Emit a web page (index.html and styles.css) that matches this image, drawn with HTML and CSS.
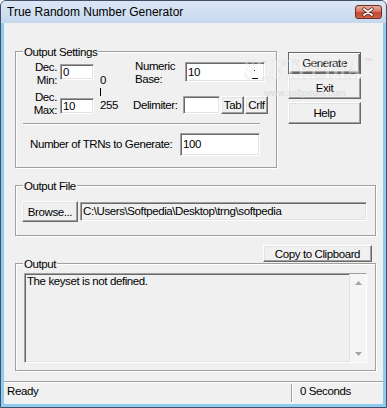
FILE: index.html
```html
<!DOCTYPE html>
<html>
<head>
<meta charset="utf-8">
<title>True Random Number Generator</title>
<link rel="stylesheet" href="styles.css">
</head>
<body>

<div class="window">
  <div class="titlebar">
    <span class="title">True Random Number Generator</span>
    <div class="close">
      <svg width="25" height="12" viewBox="0 0 25 12">
        <path d="M8 3 L16 9 M16 3 L8 9" stroke="#4a1f17" stroke-width="3.4" stroke-linecap="round"/>
        <path d="M8 3 L16 9 M16 3 L8 9" stroke="#fff" stroke-width="1.9" stroke-linecap="round"/>
      </svg>
    </div>
  </div>

  <div class="client">
    <div class="top">
      <div class="group settings">
        <span class="caption">Output Settings</span>
        <div class="grid">
          <div class="dec">Dec.<br>Min:</div>
          <div class="edit e-min">0</div>
          <div class="range">
            <div>0</div>
            <div class="bar"></div>
            <div class="r-max">255</div>
          </div>
          <div class="numeric">Numeric<br>Base:</div>
          <div class="edit e-base">10<svg class="spin" width="8" height="18" viewBox="0 0 8 18"><rect x="3" y="7" width="1" height="1" fill="#000"/><rect x="1" y="15" width="6" height="1" fill="#000"/></svg></div>

          <div class="dec dec-max">Dec.<br>Max:</div>
          <div class="edit e-max">10</div>
          <div class="delim">Delimiter:</div>
          <div class="delim-ctrls">
            <div class="edit e-delim"></div>
            <div class="btn small">Tab</div>
            <div class="btn small">Crlf</div>
          </div>
        </div>
        <div class="sep"></div>
        <div class="trn-row">
          <span class="trn-label">Number of TRNs to Generate:</span>
          <div class="edit e-trn">100</div>
        </div>
      </div>

      <div class="actions">
        <div class="btn big default">Generate</div>
        <div class="btn big">Exit</div>
        <div class="btn big">Help</div>
      </div>
    </div>

    <div class="group file">
      <span class="caption">Output File</span>
      <div class="btn browse">Browse...</div>
      <div class="edit path">C:\Users\Softpedia\Desktop\trng\softpedia</div>
    </div>

    <div class="copy-row">
      <div class="btn copy">Copy to Clipboard</div>
    </div>

    <div class="group output">
      <span class="caption">Output</span>
      <div class="edit log">
        <div class="log-text">The keyset is not defined.</div>
        <div class="scroll">
          <div class="arrow"><svg width="7" height="4" viewBox="0 0 7 4"><path d="M3.5 0 L7 4 L0 4 Z" fill="#a3a3a3"/></svg></div>
          <div class="arrow"><svg width="7" height="4" viewBox="0 0 7 4"><path d="M0 0 L7 0 L3.5 4 Z" fill="#a3a3a3"/></svg></div>
        </div>
      </div>
    </div>

    <div class="status">
      <div class="cell1">Ready</div>
      <div class="cell2">0 Seconds</div>
    </div>
  </div>

  <!-- watermark -->
  <div class="wm">SOFTPEDIA</div>
  <div class="wm-tm">&trade;</div>
  <div class="wm-url">www.softpedia.com</div>
</div>

</body>
</html>
```

FILE: styles.css
```css
html, body {margin: 0; padding: 0;}
body {
  font-family: "Liberation Sans", Arial, sans-serif;
  font-size: 11.5px; letter-spacing: -0.4px; color: #000;
}

/*window frame*/
.window {
  position: relative; box-sizing: border-box;
  width: 387px; height: 408px;
  border: 1px solid #3f5168; border-radius: 6px 6px 0 0;
  padding: 0 3px 3px; background: #8fcbef;
  display: flex; flex-direction: column; overflow: hidden;
}
.titlebar {
  height: 22px; margin: 0 -3px; padding-left: 6px; flex: none;
  display: flex; align-items: flex-start;
  background: linear-gradient(#dce7f5, #c6d8ee);
}
.title {font: 12px/22px "Liberation Sans", Arial, sans-serif; letter-spacing: 0;}
.close {
  box-sizing: border-box; width: 27px; height: 14px; margin: 4px 4px 0 auto;
  border: 1px solid #6e2e22; border-radius: 3px;
  background: linear-gradient(#eaa99b, #d67b67 45%, #c4472f 52%, #cf6049);
}
.close svg {display: block;}

.client {
  flex: 1; min-height: 0; background: #f0f0f0;
  display: flex; flex-direction: column; padding: 28px 0 0 11px;
}

/*group boxes*/
.group {
  position: relative; box-sizing: border-box;
  border: 1px solid #a0a0a0;
  box-shadow: inset 1px 1px #fff, 1px 1px #fff;
}
.caption {
  position: absolute; top: -6px; left: 7px;
  padding: 0 1px; background: #f0f0f0; line-height: 13px;
}

/*edits and buttons*/
.edit {
  box-sizing: border-box; background: #fff; padding-left: 2px;
  border: 1px solid; border-color: #a0a0a0 #fff #fff #a0a0a0;
  box-shadow: inset 1px 1px #696969, inset -1px -1px #e3e3e3;
  white-space: nowrap; overflow: hidden;
}
.btn {
  box-sizing: border-box; background: #f0f0f0;
  display: flex; align-items: center; justify-content: center;
  border: 1px solid; border-color: #fff #696969 #696969 #fff;
  box-shadow: inset -1px -1px #a0a0a0, inset 1px 1px #e3e3e3;
  white-space: nowrap;
}
.btn.default {
  border-color: #646464;
  box-shadow: inset 1px 1px #fff, inset -1px -1px #696969, inset -2px -2px #a0a0a0;
}

/*output settings*/
.top {display: flex; align-items: flex-start; gap: 11px;}
.settings {width: 262px; height: 117px; padding-top: 8px;}
.grid {
  display: grid; align-items: start;
  grid-template-columns: 44px 34px 40px 49px auto;
  grid-template-rows: 26px 26px; row-gap: 5px;
}
.dec {text-align: right; padding-right: 3px; margin-top: 1px; line-height: 13px;}
.dec-max {margin-top: 0;}
.numeric {padding-left: 1px; line-height: 13px;}
.delim {margin: 8px 0 0 -1px; line-height: 13px;}
.e-min {height: 16px; margin-top: 4px; line-height: 14px;}
.e-max {height: 16px; margin-top: 7px; line-height: 14px;}
.e-base {
  width: 80px; height: 20px; margin: 2px 0 0 2px; line-height: 18px;
  display: flex;
}
.spin {margin: 0 5px 0 auto;}
.range {grid-row: 1 / 3; grid-column: 3; padding: 14px 0 0 6px; line-height: 13px;}
.bar {width: 1px; height: 8px; margin-top: 1px; background: #000;}
.r-max {margin-top: 3px;}
.delim-ctrls {margin-top: 5px; display: flex; gap: 1px;}
.e-delim {width: 37px; height: 18px;}
.btn.small {width: 23px; height: 18px;}
.sep {
  width: 237px; height: 1px; margin: 6px 0 0 7px;
  background: #a0a0a0; box-shadow: 0 1px #fff;
}
.trn-row {display: flex; align-items: flex-start; margin-top: 9px;}
.trn-label {box-sizing: border-box; width: 164px; padding-left: 14px; margin-top: 5px; line-height: 13px;}
.e-trn {width: 80px; height: 23px; line-height: 21px;}

.actions {display: flex; flex-direction: column; gap: 3px; margin-top: 1px;}
.btn.big {width: 73px; height: 22px;}

/*output file*/
.file {
  width: 361px; height: 51px; margin-top: 17px;
  display: flex; align-items: flex-start; padding: 15px 0 0 6px;
}
.browse {width: 56px; height: 21px;}
.path {width: 287px; height: 19px; margin: 1px 0 0 2px; line-height: 17px; background: #f0f0f0;}

.copy-row {display: flex; justify-content: flex-end; margin: 9px 11px 0 0;}
.copy {width: 109px; height: 17px;}

/*output*/
.output {width: 361px; height: 108px; margin-top: 1px; padding: 9px 0 0 8px;}
.log {
  width: 343px; height: 90px; padding: 0; background: #f0f0f0;
  display: flex;
}
.log-text {flex: 1; padding: 1px 0 0 2px; line-height: 13px;}
.scroll {
  width: 16px; border-left: 1px solid #e3e3e3; background: #f5f5f5;
  display: flex; flex-direction: column; justify-content: space-between;
}
.arrow {height: 17px; display: flex; align-items: center; justify-content: center;}
.arrow svg {display: block;}

/*status bar*/
.status {
  box-sizing: border-box; height: 23px; margin: auto 0 0 -11px;
  border-top: 1px solid #a0a0a0; box-shadow: inset 0 1px #fff;
  display: flex; align-items: flex-start;
}
.cell1 {
  box-sizing: border-box; width: 288px; height: 18px; margin-top: 2px;
  border-right: 1px solid #a0a0a0; padding: 1px 0 0 3px; line-height: 13px;
}
.cell2 {
  height: 18px; margin-top: 2px; border-left: 1px solid #fff;
  padding: 1px 0 0 7px; line-height: 13px;
}

/*watermark*/
.wm {
  position: absolute; left: 243px; top: 53px; pointer-events: none;
  font: bold 20.5px "Liberation Serif", serif; letter-spacing: 0;
  color: rgba(255,255,255,0.4); -webkit-text-stroke: 0.5px rgba(170,170,170,0.3);
  transform: scaleY(1.4); transform-origin: top left;
}
.wm-tm {
  position: absolute; left: 364px; top: 56px; pointer-events: none;
  font: 7px "Liberation Sans", sans-serif; color: #d4d4d4;
}
.wm-url {
  position: absolute; left: 263px; top: 86px; pointer-events: none;
  font: 9.5px "Liberation Sans", sans-serif; letter-spacing: 0; color: #dadada;
}
```
